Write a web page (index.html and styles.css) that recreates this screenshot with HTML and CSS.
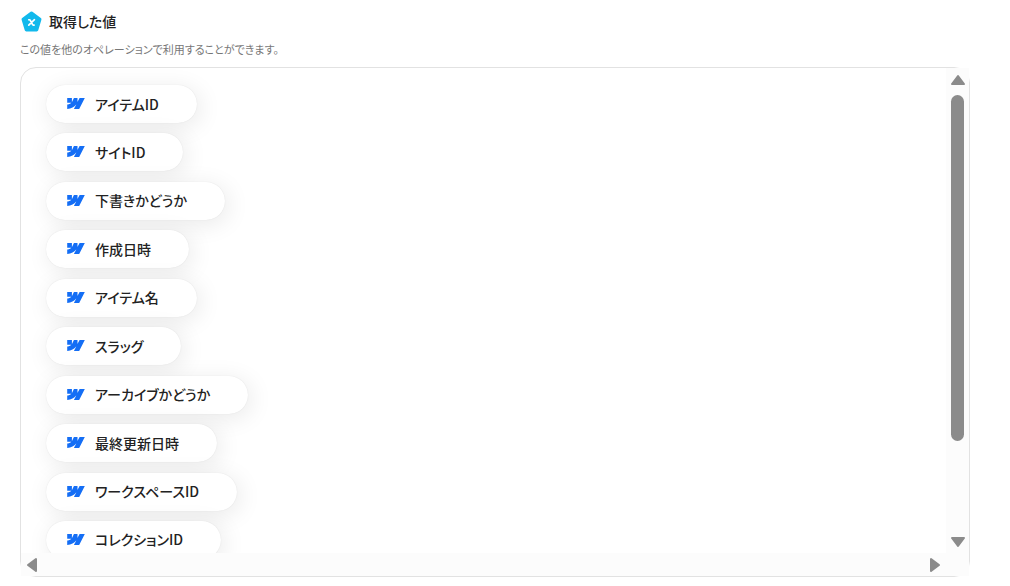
FILE: index.html
```html
<!DOCTYPE html>
<html lang="ja">
<head>
    <meta charset="UTF-8">
    <meta name="viewport" content="width=device-width, initial-scale=1.0">
    <title>取得した値</title>
    <link rel="stylesheet" href="styles.css">
</head>
<body>

<!-- ロゴの定義 -->
<svg class="defs" aria-hidden="true">
    <symbol id="logo" viewBox="0 4.5 24 15">
        <path d="m24 4.515-7.658 14.97H9.149l3.205-6.204h-.144C9.566 16.713 5.621 18.973 0 19.485v-6.118s3.596-.213 5.71-2.435H0V4.515h6.417v5.278l.144-.001 2.622-5.277h4.854v5.244h.144l2.72-5.244H24Z"/>
    </symbol>
</svg>

<header class="header">
    <svg class="header-icon" viewBox="0 0 20 20" aria-hidden="true">
        <path d="M10 2 18 7.9 15 18H5L2 7.9Z" fill="#12b9ec" stroke="#12b9ec" stroke-width="3" stroke-linejoin="round"/>
        <path d="M7.4 8.3h.6q.5 0 .7.5l2.2 4q.3.6.8.6h.8M12.8 8.3 7.4 13.4" fill="none" stroke="#fff" stroke-width="1.6" stroke-linecap="round"/>
    </svg>
    <h1>取得した値</h1>
</header>
<p class="description">この値を他のオペレーションで利用することができます。</p>

<main class="panel">
    <div class="viewport">
        <ul class="values">
            <li class="value"><svg class="logo"><use href="#logo"/></svg>アイテムID</li>
            <li class="value"><svg class="logo"><use href="#logo"/></svg>サイトID</li>
            <li class="value"><svg class="logo"><use href="#logo"/></svg>下書きかどうか</li>
            <li class="value"><svg class="logo"><use href="#logo"/></svg>作成日時</li>
            <li class="value"><svg class="logo"><use href="#logo"/></svg>アイテム名</li>
            <li class="value"><svg class="logo"><use href="#logo"/></svg>スラッグ</li>
            <li class="value"><svg class="logo"><use href="#logo"/></svg>アーカイブかどうか</li>
            <li class="value"><svg class="logo"><use href="#logo"/></svg>最終更新日時</li>
            <li class="value"><svg class="logo"><use href="#logo"/></svg>ワークスペースID</li>
            <li class="value"><svg class="logo"><use href="#logo"/></svg>コレクションID</li>
        </ul>
    </div>

    <!-- 縦スクロールバー -->
    <div class="bar bar-y">
        <button type="button" aria-label="上へ"><svg viewBox="0 0 16 12"><path d="M8 2 14 10H2Z"/></svg></button>
        <div class="track"><div class="thumb"></div></div>
        <button type="button" aria-label="下へ"><svg viewBox="0 0 16 12"><path d="M2 2h12L8 10Z"/></svg></button>
    </div>

    <!-- 横スクロールバー -->
    <div class="bar bar-x">
        <button type="button" aria-label="左へ"><svg viewBox="0 0 12 16"><path d="M10 2v12L2 8Z"/></svg></button>
        <button type="button" aria-label="右へ"><svg viewBox="0 0 12 16"><path d="M2 2v12l8-6Z"/></svg></button>
    </div>
    <div class="corner"></div>
</main>

</body>
</html>
```
FILE: styles.css
```css
* {
    margin: 0;
    padding: 0;
    box-sizing: border-box;
}

body {
    display: flex;
    flex-direction: column;
    height: 100vh;
    padding: 11px 40px 9px 20px;
    background: #fff;
    color: #222;
    font-family: "Noto Sans CJK JP", sans-serif;
    font-feature-settings: "palt";
}

.defs {
    position: absolute;
    width: 0;
    height: 0;
}

/* 見出し */
.header {
    display: flex;
    align-items: center;
    gap: 7px;
    height: 20px;
    padding-left: 1px;
}

.header-icon {
    width: 21px;
    height: 21px;
}

.header h1 {
    font-size: 14px;
    line-height: 20px;
    font-weight: 500;
}

.description {
    margin: 11px 0 10px;
    font-size: 11px;
    line-height: 15px;
    color: #777;
}

/* 値の一覧 */
.panel {
    flex: 1;
    min-height: 0;
    display: grid;
    grid-template-columns: minmax(0, 1fr) 23px;
    grid-template-rows: minmax(0, 1fr) 23px;
    border: 1px solid #e2e2e2;
    border-radius: 16px;
}

.viewport {
    overflow: hidden;
    border-top-left-radius: 15px;
}

.values {
    display: flex;
    flex-direction: column;
    justify-content: space-between;
    align-items: flex-start;
    min-height: 508px;
    padding: 17px 25px;
    list-style: none;
}

.value {
    display: flex;
    align-items: center;
    gap: 10px;
    height: 38px;
    padding: 0 38px 1px 21px;
    border-radius: 19px;
    background: #fff;
    box-shadow: 0 0 1px rgba(0, 0, 0, 0.12), 3px 4px 24px rgba(0, 0, 0, 0.09);
    font-size: 14px;
    line-height: 20px;
    font-weight: 500;
    white-space: nowrap;
}

.logo {
    width: 18px;
    height: 11px;
    fill: #146ef5;
}

/* スクロールバー */
.bar {
    display: flex;
    align-items: center;
    justify-content: space-between;
    background: #fcfcfc;
}

.bar-y {
    flex-direction: column;
    padding: 6px 0 5px;
}

.bar-x {
    padding: 0 5px;
}

.bar button {
    display: flex;
    border: none;
    background: none;
    cursor: pointer;
}

.bar svg {
    fill: #8b8b8b;
    stroke: #8b8b8b;
    stroke-width: 2;
    stroke-linejoin: round;
}

.bar-y svg {
    width: 16px;
    height: 12px;
}

.bar-x svg {
    width: 12px;
    height: 16px;
}

.track {
    flex: 1;
    width: 13px;
    margin: 9px 0 3px;
}

.thumb {
    height: 79%;
    border-radius: 7px;
    background: #8b8b8b;
}

.corner {
    background: #fcfcfc;
}
```
